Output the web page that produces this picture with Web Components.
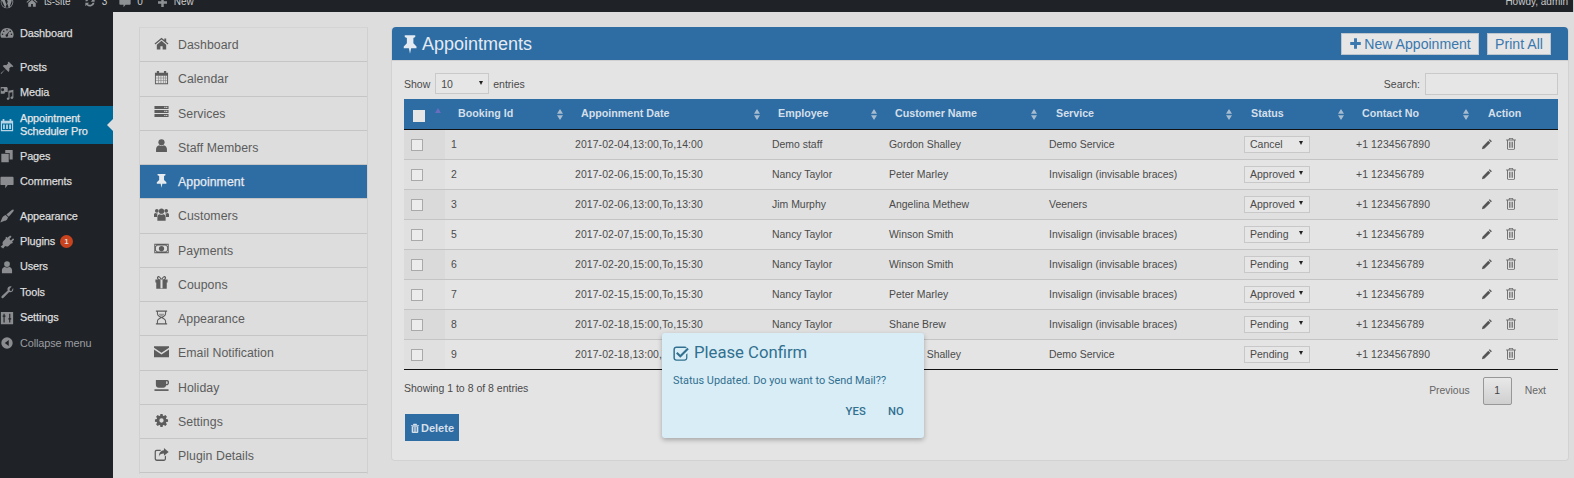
<!DOCTYPE html>
<html lang="en"><head><meta charset="utf-8"><title>Appointments</title>
<style>
html,body{margin:0;padding:0;background:#dddddd}
body{width:1574px;height:478px;overflow:hidden;font-family:"Liberation Sans",Arial,sans-serif;position:relative}
app-shell{display:block}
</style></head><body>
<app-shell></app-shell>
<script>
const ICONS={
home:'<path d="M8 1.800.6 8.100l.8 1L8 3.600l6.600 5.500.8-1L13 6V2.600h-2v1.700zM3 9.400V14.400h3.800v-3.600h2.400v3.600H13V9.400L8 5.100z"/>',
calendar:'<path fill-rule="evenodd" d="M1 2.800h2V1h2.400v1.800h5.200V1H13v1.800h2v12.400H1zM2 6.200v8h12v-8z"/><path opacity=".75" d="M2 8.300h12v.6H2zM2 11.100h12v.6H2zM4.500 6h.6v8.200h-.6zM7.100 6h.6v8.200h-.6zM9.700 6h.6v8.200h-.6zM12.200 6h.6v8.200h-.6z"/>',
server:'<path fill-rule="evenodd" d="M.5 2h15v3.300H.5zM11 3v1.300h1.200V3zM13 3v1.300h1.200V3zM.5 6.300h15v3.300H.5zM11 7.300v1.300h1.200V7.300zM13 7.300v1.300h1.200V7.300zM.5 10.600h15v3.300H.5zM11 11.600v1.300h1.200v-1.300zM13 11.600v1.300h1.200v-1.300z"/>',
user:'<circle cx="8" cy="4.600" r="3.300"/><path d="M2.200 15v-3.200C2.200 9.400 3.800 8 5.600 7.600 6.300 8.200 7.100 8.600 8 8.600s1.700-.4 2.400-1C12.200 8 13.800 9.400 13.800 11.800V15z"/>',
pin:'<path d="M3.800 1h8.400v1.400l-1.500.8v4.200l2.500 2.500v1.500H8.900L8 15.800 7.100 11.400H3V9.900l2.500-2.500V3.200l-1.700-.8z"/>',
users:'<circle cx="3" cy="4" r="2"/><circle cx="13" cy="4" r="2"/><circle cx="8" cy="4.400" r="2.800"/><path d="M0 10.400V8.200c0-1 .7-1.800 1.600-1.800.6.500 1.400.6 2.200.3-.2.500-.3 1-.3 1.500l-.3 2.400H.6c-.4 0-.6-.1-.6-.2zM16 10.400V8.200c0-1-.7-1.800-1.600-1.800-.6.500-1.400.6-2.200.3.2.500.3 1 .3 1.500l.3 2.400h2.900c.4 0 .6-.1.600-.2zM3.600 14.600v-3.900c0-1.800 1.100-3 2.700-3 .5.400 1.100.6 1.700.6s1.200-.2 1.700-.6c1.600 0 2.700 1.200 2.700 3v3.900z"/>',
money:'<path fill-rule="evenodd" d="M.3 3h15.400v10H.3zM1.300 4v1.300A1.300 1.300 0 0 0 2.600 4zM13.400 4a1.300 1.300 0 0 0 1.300 1.300V4zM1.300 10.700V12h1.300a1.300 1.300 0 0 0-1.300-1.300zM13.400 12h1.300v-1.300a1.300 1.300 0 0 0-1.300 1.300zM2 5.900v4.200a2 2 0 0 1 1.700 1.200h8.600A2 2 0 0 1 14 10.100V5.900a2 2 0 0 1-1.700-1.200H3.700A2 2 0 0 1 2 5.900zM8 5.200a2.800 2.800 0 1 1 0 5.600 2.800 2.800 0 0 1 0-5.600z"/><path d="M7.400 6.300h1.100v3.200h.6v.6H6.900v-.6h.6V7.200l-.5.3z"/>',
gift:'<path fill-rule="evenodd" d="M1.500 4.800h3.100C3.500 4.300 3 3.500 3.100 2.800 3.300 1.800 4.200 1 5.200 1.200c1.200.2 2.200 1.500 2.800 2.800.6-1.300 1.600-2.600 2.800-2.800 1-.2 1.900.6 2.100 1.600.1.700-.4 1.500-1.500 2h3.100v3.300h-.9v6.500H2.400V8.100h-.9zM5 2.500c-.6 0-.8.9-.2 1.500.5.500 1.400.8 2.200.8-.4-1-1.200-2.300-2-2.300zM11 2.500c-.8 0-1.600 1.300-2 2.300.8 0 1.700-.3 2.200-.8.6-.6.4-1.500-.2-1.500zM6.900 4.900V14h2.200V4.900z"/>',
hourglass:'<path d="M2 .6h12v1.200h-1.100V4c0 2-1.900 3-3.400 4 1.500 1 3.400 2 3.400 4v2.200H14v1.200H2v-1.200h1.100V12c0-2 1.900-3 3.400-4-1.500-1-3.400-2-3.400-4V1.800H2zm2.200 1.200V4c0 1.500 1.900 2.500 3.800 3.500C9.900 6.500 11.800 5.500 11.800 4V1.800zM8 8.500C6.100 9.500 4.200 10.500 4.200 12v2.200h7.600V12c0-1.500-1.900-2.500-3.800-3.500z" fill-rule="evenodd"/><path opacity=".55" d="M4.800 4h6.400c-.3 1-1.700 2-3.200 3-1.500-1-2.900-2-3.200-3z"/>',
envelope:'<path d="M0 2.400h16v1.600L8 9.300 0 4zM0 5.900V14h16V5.900L8 11.200z"/>',
coffee:'<path fill-rule="evenodd" d="M2 2h12.300c.9 0 1.700.9 1.700 2.200v.8c0 1.500-1 2.800-2.500 2.800H13c-.4 1.600-1.500 2.700-3 2.700H5c-1.700 0-3-1.400-3-3.200zM13 3.500v3h.5c.7 0 1-.7 1-1.500v-.5c0-.6-.3-1-1-1z"/><path d="M.5 12h15v1.800H.5z"/>',
cog:'<path fill-rule="evenodd" d="M6.800 1h2.400l.3 1.900 1 .4 1.600-1.100 1.700 1.700-1.100 1.600.4 1 1.900.3v2.400l-1.900.3-.4 1 1.100 1.600-1.700 1.700-1.600-1.100-1 .4-.3 1.900H6.800l-.3-1.900-1-.4-1.600 1.100-1.700-1.700 1.100-1.600-.4-1L1 9.200V6.800l1.900-.3.4-1-1.100-1.600 1.700-1.700 1.600 1.100 1-.4zM8 5.700a2.300 2.300 0 1 0 0 4.600 2.300 2.300 0 0 0 0-4.600z"/>',
share:'<path fill-rule="evenodd" d="M2.800 3h4.300v1.300H3c-.7 0-1 .4-1 1v7c0 .7.400 1.100 1 1.100h7.500c.6 0 1-.4 1-1V10l1.300-1v3.600c0 1.300-.9 2.400-2.300 2.400H3c-1.400 0-2.300-1.100-2.300-2.400V5.300C.7 4 1.600 3 2.800 3z"/><path d="M10.600 1l5 4.200-5 4.200V7c-2.900 0-4.700.7-5.300 3.400C5 6.500 7.300 3.700 10.600 3.500z"/>',
gauge:'<path fill-rule="evenodd" d="M8 2.200a7.500 7.500 0 0 0-6.500 11.300h13A7.500 7.500 0 0 0 8 2.200zM8 3.500a.9.9 0 1 1 0 1.800.9.900 0 0 1 0-1.800zM4.300 5a.9.9 0 1 1 0 1.800.9.900 0 0 1 0-1.800zM11.700 5a.9.9 0 1 1 0 1.800.9.900 0 0 1 0-1.800zM2.900 8.600a.9.9 0 1 1 0 1.800.9.900 0 0 1 0-1.800zM13.100 8.600a.9.9 0 1 1 0 1.800.9.900 0 0 1 0-1.800zM10.900 5.800l-2 4.200a1.400 1.400 0 1 1-1.300-.5z"/>',
wppin:'<path d="M10 .8l5.300 5.200-1.500 1-1-.7-2.300 2.300c.5 1.600.2 3-.7 4L6.300 9.200 1.400 14.800.7 14l5.700-5-3.300-3.400c1-.9 2.400-1.200 4-.7l2.300-2.300-.7-1z"/>',
media:'<path fill-rule="evenodd" d="M.8 1h7l1 1.400v4.700c-.8-.3-2.300-.4-2.800 0-.6.400-.9 1-.9 1.700H.8zM3 2.500a1.700 1.700 0 1 0 0 3.400 1.700 1.700 0 0 0 0-3.400z"/><path d="M9.600 5.400l5.700-1.100v8.700c0 1-.9 1.800-1.900 1.800-.8 0-1.400-.5-1.400-1.300 0-.9.900-1.500 1.800-1.500l.3.100V7.200l-3.200.6v6.600c0 .9-.9 1.600-1.800 1.600-.8 0-1.400-.5-1.400-1.300 0-.9.900-1.500 1.700-1.500l.3.100z"/>',
calwp:'<path fill-rule="evenodd" d="M3 1h2v2h6V1h2v2h2v12H1V3h2zM2.300 6.200V13.700h11.400V6.200z"/><path d="M3.500 7.400h2v5.200h-2zM7 7.400h2v5.200H7zM10.500 7.400h2v5.200h-2z"/>',
pages:'<path d="M6 1h8.500v11H11V4.500H6zM1.500 5.500H10V15H1.500z"/>',
comment:'<path d="M1.500 2h13c.6 0 1 .4 1 1v7.500c0 .6-.4 1-1 1H8.800L6 15v-3.500H1.500c-.6 0-1-.4-1-1V3c0-.6.4-1 1-1z"/>',
brush:'<path d="M15.500 .9c.5.5.2 1.400-.6 2.200L10 8.800 7.300 6.200l5.800-4.700c1-.8 1.900-1 2.400-.6zM6.500 6.900l2.700 2.600-.8 1.900c-.5 1.300-1.900 2-3.100 2.100L.3 15.500l2-4.800c.4-1.600 1.400-2.900 3-3.400z"/>',
plug:'<path d="M11.700.6l1.500 1.400-2.500 2.600 1.700 1.600 2.500-2.500 1.400 1.500-2.500 2.500 1 1-1.300 1.200-.6-.6-2.800 2.900c-1.100 1.100-2.900 1.300-4.200.5l-2.300 2.700L.7 13.400l2.600-2.400c-.7-1.300-.5-3 .6-4.100l2.800-2.900-.6-.6 1.200-1.300 1 1z"/>',
wrench:'<path d="M14.900 3.300c.7 1.700.2 3.300-.9 4.200-1 .8-2.400 1-3.500.5l-6.400 6.700c-.6.600-1.500.7-2.100.1-.6-.6-.5-1.500.1-2.100l6.700-6.400c-.5-1.200-.3-2.600.5-3.600 1-1.100 2.500-1.500 4-1L10.900 4.600l.4 1.900 1.900.4z"/>',
sliders:'<path fill-rule="evenodd" d="M1 1h14v14H1zM4 3v2H3v1.600h1V13h1.300V6.600h1V5h-1V3zM10.500 3v5.200h-1v1.600h1V13h1.300V9.800h1V8.200h-1V3z"/>',
collapse:'<path fill-rule="evenodd" d="M8 1.500a6.500 6.500 0 1 1 0 13 6.500 6.500 0 0 1 0-13zM10 4.500L5.500 8l4.500 3.500z"/>',
pencil:'<path d="M11.700 1.500l2.800 2.800-1.300 1.300-2.800-2.800zM9.700 3.500l2.800 2.800-7.800 7.800-3.400.8.700-3.400z"/>',
trash:'<path fill-rule="evenodd" d="M5.500 1.200h5l.8 1.800h3.200v1.300h-1.200v10c0 .8-.6 1.500-1.300 1.500H4c-.7 0-1.300-.7-1.300-1.500v-10H1.500V3h3.200zM6.400 2.300L6 3h4l-.4-.7zM4 4.300v10c0 .2.100.4.300.4h7.400c.2 0 .3-.2.300-.4v-10zM5.300 5.800h1.200v7.500H5.300zM7.400 5.800h1.200v7.500H7.400zM9.500 5.800h1.200v7.500H9.500z"/>',
trashs:'<path d="M5.500 1.200h5l.8 1.800h3.200v1.300H1.500V3h3.200z"/><path fill-rule="evenodd" d="M2.700 5h10.600v9.500c0 .8-.6 1.500-1.300 1.500H4c-.7 0-1.300-.7-1.300-1.500zM5.200 6.300v7.800h1V6.300zM7.500 6.300v7.800h1V6.300zM9.800 6.300v7.800h1V6.300z"/>',
plus:'<path d="M6.200 1.500h3.600v4.700h4.700v3.600H9.800v4.700H6.200V9.800H1.500V6.200h4.700z"/>',
check:'<path fill-rule="evenodd" d="M3.500 1.600h8c1 0 1.800.3 2.300.7l-1 1c-.3-.2-.7-.3-1.300-.3h-8c-1 0-1.600.7-1.600 1.600v8.200c0 .9.600 1.600 1.600 1.600h8c1 0 1.600-.7 1.600-1.600V9.600l1.300-1.300v4.500c0 1.700-1.300 3-3 3h-8c-1.700 0-3-1.300-3-3V4.600c0-1.700 1.300-3 3-3z"/><path d="M14.300 2.800l1.500 1.500-8.500 8.500L3 8.500 4.500 7l2.800 2.800z"/>',
wp:'<path fill-rule="evenodd" d="M8 .8a7.200 7.200 0 1 1 0 14.400A7.200 7.200 0 0 1 8 .8zM8 1.600a6.400 6.400 0 0 0-5.400 3c1.500 0 3.700-.2 3.700-.2l.2.800-1.100.1 2.100 6.200 1.300-3.800-.9-2.400-.8-.1.100-.8s2.300.2 3.500.1c.4 0 .9-.3.900-.3A6.400 6.400 0 0 0 8 1.600zM2 6a6.400 6.400 0 0 0 3.700 8.100zM13.400 4.900c.2 1.100-.1 2.100-.4 3l-2 5.700A6.400 6.400 0 0 0 13.400 4.900zM8.100 9l-1.900 5.400c1.200.4 2.500.3 3.700-.1z"/>',
refresh:'<path d="M8 1.800c1.900 0 3.500.9 4.500 2.200l1.700-1.500v5h-5l1.600-1.500A3.700 3.700 0 0 0 4.500 7H1.900A6.200 6.200 0 0 1 8 1.800zM1.800 9h5L5.200 10.500A3.700 3.700 0 0 0 11.500 9h2.600a6.200 6.200 0 0 1-10.600 3L1.800 13.500z"/>'
};
class UiIcon extends HTMLElement{
  connectedCallback(){
    const s=this.getAttribute('size')||16,w=this.getAttribute('w')||s;
    this.attachShadow({mode:'open'}).innerHTML=`<style>:host{display:inline-flex;flex:none;width:${w}px;height:${s}px}svg{width:100%;height:100%;fill:currentColor;display:block}</style><svg viewBox="0 0 16 16" preserveAspectRatio="none" aria-hidden="true">${ICONS[this.getAttribute('name')]||''}</svg>`;
  }
}
customElements.define('ui-icon',UiIcon);

class WpTopbar extends HTMLElement{
  connectedCallback(){
    const item=(ml,ic,t,sz)=>`<span class="i" style="margin-left:${ml}px"><ui-icon name="${ic}" size="${sz}"></ui-icon>${t?`<b>${t}</b>`:''}</span>`;
    this.attachShadow({mode:'open'}).innerHTML=`<style>
    :host{display:block;height:12px;background:#1f2327;overflow:hidden;color:#c9cacb;font:10px/20px "Liberation Sans",sans-serif}
    .in{display:flex;align-items:center;height:20px;margin-top:-8px}
    .i{display:inline-flex;align-items:center;color:#8e9194}
    b{font-weight:400;color:#c9cacb;margin-left:6px}
    .r{margin-left:auto;color:#c9cacb}
    .a{width:1px;height:20px;background:#c9cacb;margin-left:5px;flex:none}
    </style><div class="in">${item(0,'wp','',14)}${item(12,'home','ts-site',12)}${item(13,'refresh','3',12)}${item(12,'comment','0',12)}${item(14,'plus','New',11)}<span class="r">Howdy, admin</span><i class="a"></i></div>`;
  }
}
customElements.define('wp-topbar',WpTopbar);

class WpSideItem extends HTMLElement{
  connectedCallback(){
    const a=this.hasAttribute('active'),dim=this.hasAttribute('dim');
    this.attachShadow({mode:'open'}).innerHTML=`<style>
    :host{display:flex;align-items:center;height:25.4px;padding-left:20px;position:relative;color:${dim?'#9b9ea1':'#dcdcdc'};font:10.900px/13px "Liberation Sans",sans-serif;-webkit-text-stroke:${dim?'0':'.25px'};letter-spacing:-.1px}
    :host([active]){background:#006a9b;height:38px;color:#e6e6e6}
    :host([gap]){margin-top:9px}
    ui-icon{position:absolute;left:0;top:50%;margin-top:-7px;color:${a?'#b9d5e5':'#8a8c8f'}}
    .n{position:absolute;right:0;top:50%;margin-top:-6px;border:6px solid transparent;border-right-color:#dddddd;border-left:0}
    </style><ui-icon name="${this.getAttribute('icon')}" size="14"></ui-icon><span><slot></slot></span><slot name="extra"></slot>${a?'<i class="n"></i>':''}`;
  }
}
customElements.define('wp-side-item',WpSideItem);

class WpBadge extends HTMLElement{
  connectedCallback(){
    this.attachShadow({mode:'open'}).innerHTML=`<style>:host{display:inline-flex;align-items:center;justify-content:center;width:13px;height:13px;border-radius:50%;background:#c9431e;color:#ddd;font:700 8px/13px "Liberation Sans",sans-serif;margin-left:5px;-webkit-text-stroke:0}</style><slot></slot>`;
  }
}
customElements.define('wp-badge',WpBadge);

class WpSidebar extends HTMLElement{
  connectedCallback(){
    this.attachShadow({mode:'open'}).innerHTML=`<style>:host{display:block;flex:none;width:113px;height:466px;background:#1f2227;padding-top:8.500px;box-sizing:border-box}</style><slot></slot>`;
  }
}
customElements.define('wp-sidebar',WpSidebar);

class NavItem extends HTMLElement{
  connectedCallback(){
    this.attachShadow({mode:'open'}).innerHTML=`<style>
    :host{display:flex;align-items:center;height:34.27px;box-sizing:border-box;border-bottom:1.500px solid #c5c5c5;color:#5c5c5c;font:12.300px/16px "Liberation Sans",sans-serif;letter-spacing:.05px}
    :host([active]){background:#2e6da4;color:#e6ebf0;-webkit-text-stroke:.25px}
    .ic{flex:none;box-sizing:border-box;width:38px;display:flex;justify-content:center;padding-left:4px;margin-top:-3px}
    .tx{position:relative;top:.4px}
    </style><span class="ic"><ui-icon name="${this.getAttribute('icon')}" size="15"></ui-icon></span><span class="tx"><slot></slot></span>`;
  }
}
customElements.define('nav-item',NavItem);

class PluginNav extends HTMLElement{
  connectedCallback(){
    this.attachShadow({mode:'open'}).innerHTML=`<style>:host{display:block;flex:none;width:229px;box-sizing:border-box;border:1px solid #d0d0d0;border-bottom:0;border-top-color:#d4d4d4;height:447px}</style><slot></slot>`;
  }
}
customElements.define('plugin-nav',PluginNav);

class HeadBtn extends HTMLElement{
  connectedCallback(){
    this.attachShadow({mode:'open'}).innerHTML=`<style>:host{display:inline-flex;align-items:center;justify-content:center;height:22px;box-sizing:border-box;background:#e6e6e6;border:1px solid #bcc4cc;color:#3a78ad;font:14.100px/20px "Liberation Sans",sans-serif;gap:2px}</style><slot></slot>`;
  }
}
customElements.define('head-btn',HeadBtn);

class SortMark extends HTMLElement{
  connectedCallback(){
    this.attachShadow({mode:'open'}).innerHTML=`<style>:host{position:absolute;right:6px;top:10px;width:6px;height:11px;display:block}svg{display:block;fill:#a8bccf}</style><svg width="6" height="11" viewBox="0 0 6 11"><path d="M3 0l3 4.700H0zM3 11L0 6.300h6z"/></svg>`;
  }
}
customElements.define('sort-mark',SortMark);

const COLS='41px 124px 197px 117px 160px 195px 112px 125px 83px';
class THead extends HTMLElement{
  connectedCallback(){
    const cols=[['Booking Id',13],['Appoinment Date',12],['Employee',12],['Customer Name',12],['Service',13],['Status',13],['Contact No',12],['Action',13,1]];
    this.attachShadow({mode:'open'}).innerHTML=`<style>
    :host{display:grid;grid-template-columns:${COLS};height:31px;box-sizing:border-box;background:#2e6da4;border-bottom:1px solid #111;color:#d4dfe9;font:700 10.700px/28px "Liberation Sans",sans-serif}
    div{position:relative;white-space:nowrap}
    .cb{width:12px;height:12px;background:#e6e6e6;border:0;position:absolute;left:9px;top:11px}
    .up{position:absolute;left:31px;top:9px;width:0;height:0;border:3.500px solid transparent;border-top:0;border-bottom:5px solid #6a6cc0}
    </style><div><i class="cb"></i><i class="up"></i></div>${cols.map(([t,p,n])=>`<div style="padding-left:${p}px">${t}${n?'':'<sort-mark></sort-mark>'}</div>`).join('')}`;
  }
}
customElements.define('t-head',THead);

class StatusSelect extends HTMLElement{
  connectedCallback(){
    this.attachShadow({mode:'open'}).innerHTML=`<style>
    :host{display:flex;align-items:center;box-sizing:border-box;width:66px;height:17px;border:1px solid #c8c8c8;background:#e6e6e6;color:#4a4a4a;padding-left:5px;font:10.500px/15px "Liberation Sans",sans-serif;position:relative}
    i{position:absolute;right:6px;top:4px;border:2px solid transparent;border-top:4px solid #222;border-bottom:0}
    </style><slot></slot><i></i>`;
  }
}
customElements.define('status-select',StatusSelect);

class TRow extends HTMLElement{
  connectedCallback(){
    const g=n=>this.getAttribute(n);
    this.attachShadow({mode:'open'}).innerHTML=`<style>
    :host{display:grid;grid-template-columns:${COLS};height:30px;box-sizing:border-box;border-bottom:1px solid #c4c4c4;background:#e4e4e4;color:#4b4b4b;font:10.450px/29px "Liberation Sans",sans-serif;align-items:center}
    :host([odd]){background:#e0e0e0}
    :host([last]){border-bottom-color:#111}
    div{padding-left:6px;white-space:nowrap;height:29px}
    .n{letter-spacing:.1px}
    .s{padding:0;position:relative;display:flex;align-items:center;background:#e0e0e0}
    :host([odd]) .s{background:#dadada}
    .s i{width:10px;height:10px;border:1px solid #a9a9a9;background:#ececec;margin-left:7px;margin-top:1px}
    .st{display:flex;align-items:center}
    .a{display:flex;align-items:center;gap:12px;color:#555;padding-bottom:2px;height:27px}
    .a ui-icon:last-child{color:#707070}
    </style><div class="s"><i></i></div><div>${g('id')}</div><div class="n">${g('date')}</div><div>${g('emp')}</div><div>${g('cust')}</div><div>${g('svc')}</div><div class="st"><status-select>${g('status')}</status-select></div><div class="n">${g('tel')}</div><div class="a"><ui-icon name="pencil" size="12"></ui-icon><ui-icon name="trash" size="13" w="12"></ui-icon></div>`;
  }
}
customElements.define('t-row',TRow);

class ConfirmDialog extends HTMLElement{
  connectedCallback(){
    this.attachShadow({mode:'open'}).innerHTML=`<style>
    :host{position:absolute;left:662px;top:333px;width:262px;height:105px;box-sizing:border-box;background:#d9edf7;border-radius:3px;box-shadow:0 2px 5px rgba(0,0,0,.28);color:#31708f;padding:10px 11px;display:flex;flex-direction:column}
    .t{display:flex;align-items:center;gap:5px;font:16.700px/20px Roboto,sans-serif;height:20px}
    .m{font:10.900px/14px Roboto,sans-serif;margin-top:11px}
    .b{margin-top:auto;display:flex;justify-content:flex-end;gap:22px;font:500 11.200px/14px Roboto,sans-serif;padding:0 9px 9px 0;letter-spacing:.2px}
    </style><div class="t"><ui-icon name="check" size="16"></ui-icon>Please Confirm</div><div class="m">Status Updated. Do you want to Send Mail??</div><div class="b"><span>YES</span><span>NO</span></div>`;
  }
}
customElements.define('confirm-dialog',ConfirmDialog);

class ApptPanel extends HTMLElement{
  connectedCallback(){
    const rows=[
    ['1','2017-02-04,13:00,To,14:00','Demo staff','Gordon Shalley','Demo Service','Cancel','+1 1234567890'],
    ['2','2017-02-06,15:00,To,15:30','Nancy Taylor','Peter Marley','Invisalign (invisable braces)','Approved','+1 123456789'],
    ['3','2017-02-06,13:00,To,13:30','Jim Murphy','Angelina Methew','Veeners','Approved','+1 1234567890'],
    ['5','2017-02-07,15:00,To,15:30','Nancy Taylor','Winson Smith','Invisalign (invisable braces)','Pending','+1 123456789'],
    ['6','2017-02-20,15:00,To,15:30','Nancy Taylor','Winson Smith','Invisalign (invisable braces)','Pending','+1 123456789'],
    ['7','2017-02-15,15:00,To,15:30','Nancy Taylor','Peter Marley','Invisalign (invisable braces)','Approved','+1 123456789'],
    ['8','2017-02-18,15:00,To,15:30','Nancy Taylor','Shane Brew','Invisalign (invisable braces)','Pending','+1 123456789'],
    ['9','2017-02-18,13:00,To,13:30','Nancy Taylor','Gordon Shalley','Demo Service','Pending','+1 1234567890']];
    this.attachShadow({mode:'open'}).innerHTML=`<style>
    :host{display:block;flex:none;width:1178px;height:434px;box-sizing:border-box;background:#e4e4e4;border:1px solid #d2d2d2;border-top:0;border-radius:4px;color:#4a4a4a}
    .h{height:34px;box-sizing:border-box;background:#2e6da4;border-radius:4px 4px 0 0;display:flex;align-items:center;color:#e3eaf1;padding:0 17px 0 8px;border-bottom:1px solid #d0d0d0}
    .h .t{font:18px/24px "Liberation Sans",sans-serif;margin-left:2px;margin-right:auto}
    .h head-btn+head-btn{margin-left:8px}
    .pad{padding:0 10px 0 12px}
    .tool{display:flex;align-items:center;height:38px;box-sizing:border-box;padding-top:7px;font:10.500px/14px "Liberation Sans",sans-serif}
    .box{display:flex;align-items:center;box-sizing:border-box;border:1px solid #c9c9c9;background:#e6e6e6;height:21px;margin:0 4px 0 5px;position:relative}
    .sel{width:54px;padding-left:5px;font:10.500px/14px "Liberation Sans",sans-serif}
    .sel i{position:absolute;right:5px;top:7px;border:2px solid transparent;border-top:4px solid #222;border-bottom:0}
    .se{margin-left:auto}
    .inp{width:133px;margin-right:0;height:22px}
    .ft{display:flex;align-items:flex-start;padding-top:7px;font:10.500px/14px "Liberation Sans",sans-serif}
    .ft .info{padding-top:4px}
    .pg{margin-left:auto;display:flex;align-items:center;color:#666;font:10.400px/14px "Liberation Sans",sans-serif;padding-right:12px}
    .n1{width:29px;height:28px;box-sizing:border-box;border:1px solid #979797;border-radius:2px;background:linear-gradient(#e8e8e8,#cfcfcf);display:flex;align-items:center;justify-content:center;margin:0 13px;color:#444}
    .del{display:inline-flex;align-items:center;gap:1px;margin-left:1px;margin-top:9px;width:54px;height:27px;box-sizing:border-box;padding-left:5px;background:#2e6da4;color:#d5dfe9;font:700 11px/14px "Liberation Sans",sans-serif}
    </style>
    <div class="h"><ui-icon name="pin" size="20"></ui-icon><span class="t">Appointments</span><head-btn style="width:138px"><ui-icon name="plus" size="13"></ui-icon>New Appoinment</head-btn><head-btn style="width:64px">Print All</head-btn></div>
    <div class="pad">
      <div class="tool">Show<span class="box sel">10<i></i></span>entries<span class="se">Search:</span><span class="box inp"></span></div>
      <t-head></t-head>
      ${rows.map((r,i)=>`<t-row id="${r[0]}" date="${r[1]}" emp="${r[2]}" cust="${r[3]}" svc="${r[4]}" status="${r[5]}" tel="${r[6]}" ${i%2==0?'odd':''} ${i==7?'last':''}></t-row>`).join('')}
      <div class="ft"><span class="info">Showing 1 to 8 of 8 entries</span><span class="pg">Previous<span class="n1">1</span>Next</span></div>
      <div class="del"><ui-icon name="trashs" size="10"></ui-icon>Delete</div>
    </div>`;
  }
}
customElements.define('appt-panel',ApptPanel);

class AppShell extends HTMLElement{
  connectedCallback(){
    const nav=[['home','Dashboard'],['calendar','Calendar'],['server','Services'],['user','Staff Members'],['pin','Appoinment',1],['users','Customers'],['money','Payments'],['gift','Coupons'],['hourglass','Appearance'],['envelope','Email Notification'],['coffee','Holiday'],['cog','Settings'],['share','Plugin Details']];
    this.attachShadow({mode:'open'}).innerHTML=`<style>
    :host{display:block}
    .row{display:flex;align-items:flex-start}
    .c{display:flex;gap:23px;padding:15px 0 0 26px;align-items:flex-start}
    </style>
    <wp-topbar></wp-topbar>
    <div class="row">
      <wp-sidebar>
        <wp-side-item icon="gauge">Dashboard</wp-side-item>
        <wp-side-item icon="wppin" gap>Posts</wp-side-item>
        <wp-side-item icon="media">Media</wp-side-item>
        <wp-side-item icon="calwp" active>Appointment<br>Scheduler Pro</wp-side-item>
        <wp-side-item icon="pages">Pages</wp-side-item>
        <wp-side-item icon="comment">Comments</wp-side-item>
        <wp-side-item icon="brush" gap>Appearance</wp-side-item>
        <wp-side-item icon="plug">Plugins<wp-badge slot="extra">1</wp-badge></wp-side-item>
        <wp-side-item icon="user">Users</wp-side-item>
        <wp-side-item icon="wrench">Tools</wp-side-item>
        <wp-side-item icon="sliders">Settings</wp-side-item>
        <wp-side-item icon="collapse" dim>Collapse menu</wp-side-item>
      </wp-sidebar>
      <div class="c">
        <plugin-nav>${nav.map(n=>`<nav-item icon="${n[0]}" ${n[2]?'active':''}>${n[1]}</nav-item>`).join('')}</plugin-nav>
        <appt-panel></appt-panel>
      </div>
    </div>
    <confirm-dialog></confirm-dialog>`;
  }
}
customElements.define('app-shell',AppShell);
</script>
</body></html>
